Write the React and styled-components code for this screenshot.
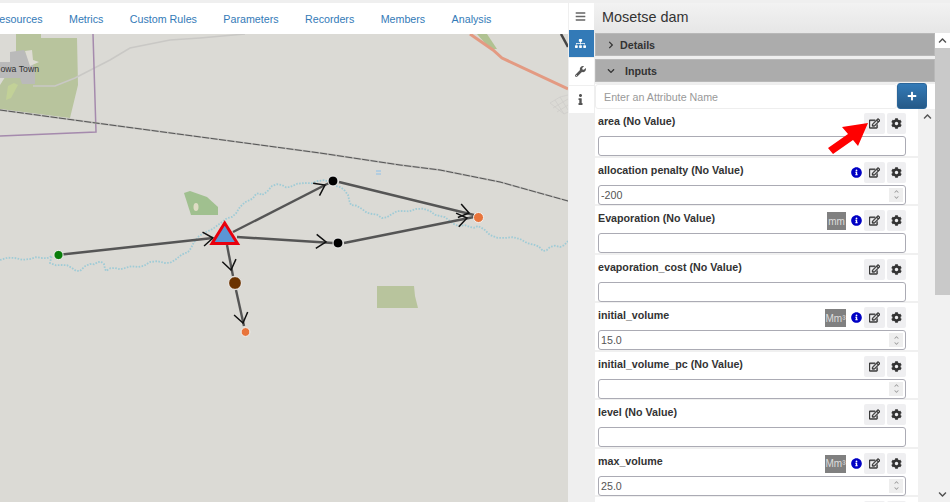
import React from 'react';
import styled, { createGlobalStyle } from 'styled-components';
import {
  FaBars, FaSitemap, FaWrench, FaInfo, FaChevronRight, FaChevronDown, FaChevronUp,
  FaPlus, FaInfoCircle, FaRegEdit, FaCog,
} from 'react-icons/fa';

const GlobalStyle = createGlobalStyle`
  html, body { margin: 0; padding: 0; height: 100%; overflow: hidden; }
  body { font-family: "Liberation Sans", Arial, sans-serif; font-size: 10.7px; color: #333; background: #f0f0f0; }
  * { box-sizing: border-box; }
`;

const Page = styled.div`
  position: relative;
  width: 950px;
  height: 502px;
  display: flex;
  padding-top: 3px;
  background: #efefef;
  overflow: hidden;
`;

const MapColumn = styled.div`
  width: 568px;
  display: flex;
  flex-direction: column;
  overflow: hidden;
`;

const Nav = styled.nav`
  height: 31px;
  flex: none;
  display: flex;
  align-items: center;
  gap: 26.4px;
  margin-left: -8.5px;
  padding-top: 1px;
  background: #fff;
  white-space: nowrap;
`;

const NavLink = styled.a`
  font-size: 10.7px;
  color: #337ab7;
`;

const MapCanvas = styled.svg`
  display: block;
  width: 568px;
  height: 468px;
  background: #dbdad5;
`;

const Rail = styled.div`
  width: 25px;
  flex: none;
  margin-left: 1px;
  display: flex;
  flex-direction: column;
  gap: 1px;
`;

const RailButton = styled.div`
  height: 27px;
  display: flex;
  align-items: center;
  padding-left: 6px;
  font-size: 11px;
  background: ${p => (p.$active ? '#337ab7' : '#fff')};
  color: ${p => (p.$active ? '#fff' : '#555')};
  &:first-child { margin-bottom: -1px; color: #666; }
`;

const Panel = styled.div`
  flex: 1;
  min-width: 0;
  display: flex;
  flex-direction: column;
`;

const PanelTitle = styled.h1`
  flex: none;
  height: 30px;
  margin: 0;
  padding: 0 0 2px 8px;
  display: flex;
  align-items: center;
  font-size: 14.4px;
  font-weight: 400;
  color: #333;
  background: linear-gradient(#f2f2f2, #e6e6e6);
`;

const PanelBody = styled.div`
  flex: 1;
  min-height: 0;
  display: flex;
`;

const PanelMain = styled.div`
  width: 341px;
  flex: none;
  display: flex;
  flex-direction: column;
  padding-left: 1px;
`;

const AccordionHead = styled.div`
  flex: none;
  height: 23px;
  margin-bottom: 3px;
  display: flex;
  align-items: center;
  gap: ${p => p.$gap}px;
  padding-left: 11px;
  background: #acacac;
  border: 1px solid #b8b8b8;
  font-size: 10.7px;
  font-weight: 700;
  color: #333;
  svg { font-size: 8px; }
`;

const AddRow = styled.div`
  flex: none;
  display: flex;
  height: 25px;
  margin-top: -1px;
  background: #fff;
`;

const AddInput = styled.input`
  width: 302px;
  height: 25px;
  padding: 0 8px;
  border: 1px solid #eee;
  border-radius: 3px;
  font: 10.7px "Liberation Sans", Arial, sans-serif;
  &::placeholder { color: #999; opacity: 1; }
`;

const AddButton = styled.button`
  width: 30px;
  height: 26px;
  margin-top: -1px;
  padding: 0;
  border: 1px solid #2b669a;
  border-radius: 3px;
  display: flex;
  align-items: center;
  justify-content: center;
  font-size: 10px;
  color: #fff;
  background: linear-gradient(#337ab7, #265a88);
`;

const ListWrap = styled.div`
  flex: 1;
  min-height: 0;
  display: flex;
  background: #fff;
`;

const List = styled.div`
  width: 323px;
  flex: none;
  overflow: hidden;
`;

const Row = styled.div`
  height: 48.5px;
  padding: 4px 12px 0 3px;
  border-bottom: 2px solid #f0f0f0;
`;

const RowHead = styled.div`
  height: 21px;
  margin-bottom: 2px;
  display: flex;
  align-items: flex-start;
  gap: 2px;
`;

const RowLabel = styled.div`
  flex: 1;
  font-size: 10.7px;
  font-weight: 700;
  line-height: 16px;
  color: #333;
`;

const UnitBadge = styled.div`
  height: 18px;
  width: ${p => p.$w}px;
  flex: none;
  margin: 2px 2px 0 0;
  display: flex;
  align-items: center;
  justify-content: center;
  font-size: 10px;
  color: #ddd;
  background: #808080;
`;

const InfoDot = styled.div`
  width: 12px;
  height: 21px;
  display: flex;
  align-items: center;
  justify-content: center;
  font-size: 11px;
  color: #0000c4;
`;

const ToolButton = styled.div`
  width: ${p => p.$w}px;
  height: 21px;
  display: flex;
  align-items: center;
  justify-content: center;
  font-size: 11px;
  color: #333;
  background: #efeff1;
  border-radius: 2px;
`;

const EditIcon = styled(FaRegEdit)`
  stroke: currentColor;
  stroke-width: 24px;
`;

const ValueWrap = styled.div`
  position: relative;
`;

const ValueInput = styled.input`
  display: block;
  width: 100%;
  height: 20px;
  padding: 0 2px;
  border: 1px solid #ababb4;
  border-radius: 3px;
  background: #fff;
  font: 10.7px "Liberation Sans", Arial, sans-serif;
  color: #555;
  &::-webkit-inner-spin-button { display: none; }
`;

const Spinner = styled.div`
  position: absolute;
  top: 3px;
  right: 3px;
  width: 14px;
  height: 14px;
  display: flex;
  flex-direction: column;
  align-items: center;
  justify-content: center;
  gap: 1px;
  font-size: 5px;
  color: #999;
  background: #eee;
`;

const InnerScroll = styled.div`
  width: 17px;
  flex: none;
  padding: 3px 0 0 1px;
  background: #f1f1f1;
  font-size: 9px;
  color: #555;
  text-align: center;
`;

const OuterScroll = styled.div`
  width: 15px;
  flex: none;
  display: flex;
  flex-direction: column;
  background: #f1f1f1;
  font-size: 9px;
  color: #505050;
`;

const ScrollCap = styled.div`
  height: 15px;
  flex: none;
  display: flex;
  align-items: center;
  justify-content: center;
  background: ${p => (p.$white ? '#fff' : 'transparent')};
`;

const ScrollThumb = styled.div`
  height: 247px;
  flex: none;
  background: #c9c9c9;
`;

const ScrollRest = styled.div`
  flex: 1;
`;

const Callout = styled.svg`
  position: absolute;
  left: 825px;
  top: 120px;
  width: 46px;
  height: 36px;
`;

const navItems = ['Resources', 'Metrics', 'Custom Rules', 'Parameters', 'Recorders', 'Members', 'Analysis'];

const attributes = [
  { label: 'area (No Value)', type: 'text' },
  { label: 'allocation penalty (No Value)', type: 'number', value: '-200', info: true },
  { label: 'Evaporation (No Value)', type: 'text', info: true, unit: 'mm', unitW: 19 },
  { label: 'evaporation_cost (No Value)', type: 'text' },
  { label: 'initial_volume', type: 'number', value: '15.0', info: true, unit: 'Mm³', unitW: 21 },
  { label: 'initial_volume_pc (No Value)', type: 'number' },
  { label: 'level (No Value)', type: 'text' },
  { label: 'max_volume', type: 'number', value: '25.0', info: true, unit: 'Mm³', unitW: 21 },
  { label: '', type: 'number' },
];

const riverPoints = [
  [0, 260], [15, 258], [30, 259], [42, 258], [52, 256], [50, 263], [62, 265], [72, 268], [80, 271], [90, 264],
  [98, 262], [104, 264], [106, 271], [115, 268], [125, 268], [138, 267], [150, 262], [165, 263], [175, 260],
  [188, 252], [194, 242], [204, 233], [222, 222], [232, 217], [240, 207], [250, 200], [256, 194], [262, 195],
  [272, 186], [282, 185], [290, 187], [305, 183], [318, 181], [330, 182], [340, 187], [348, 195], [351, 205],
  [362, 209], [372, 214], [382, 218], [392, 214], [402, 211], [416, 209], [430, 211], [440, 216], [450, 221],
  [460, 226], [470, 227], [478, 226], [490, 235], [505, 238], [520, 239], [535, 245], [543, 251], [550, 247],
  [560, 247], [568, 241],
];

// small wiggle so the river doesn't read as straight segments
const river = riverPoints
  .map(([x, y], i) => `${i ? 'L' : 'M'}${x} ${y}` + (riverPoints[i + 1]
    ? ` L${(x + riverPoints[i + 1][0]) / 2} ${(y + riverPoints[i + 1][1]) / 2 + (i % 2 ? 1.3 : -1.3)}`
    : ''))
  .join(' ');

const railway = 'M0 110 L96 123 L320 153 L400 165 L440 170 L500 182 L568 201';

const links = [
  { from: [62, 254.5], to: [213, 238], tip: [213, 238] },
  { from: [233, 232], to: [329, 183], tip: [325, 185] },
  { from: [237, 237], to: [333, 243], tip: [326, 242] },
  { from: [227, 245], to: [233, 276], tip: [231, 270] },
  { from: [236, 290], to: [244, 326], tip: [243, 323] },
  { from: [339, 182], to: [474, 215], tip: [469, 213] },
  { from: [344, 243], to: [474, 217], tip: [467, 218] },
];

const Arrow = ({ from, to, tip }) => {
  const angle = Math.atan2(to[1] - from[1], to[0] - from[0]);
  const barb = a => [tip[0] - 12 * Math.cos(angle + a), tip[1] - 12 * Math.sin(angle + a)];
  const [ax, ay] = barb(0.62);
  const [bx, by] = barb(-0.62);
  return (
    <g>
      <line x1={from[0]} y1={from[1]} x2={to[0]} y2={to[1]} stroke="#555" strokeWidth="2.4" />
      <path d={`M${ax} ${ay} L${tip[0]} ${tip[1]} L${bx} ${by}`} fill="none" stroke="#111" strokeWidth="1.5" />
    </g>
  );
};

const Node = ({ x, y, r, fill }) => <circle cx={x} cy={y} r={r} fill={fill} stroke="#f2f2f2" strokeWidth="1" />;

const MapView = () => (
  <MapCanvas viewBox="0 34 568 468">
    <polygon points="16,34 41,34 41,38 77,38 78,85 70,118 0,109 0,85 16,60" fill="#b8c49d" />
    <polygon points="10,52 24,50 28,58 35,68 35,84 22,84 20,78 0,78 0,62 10,62" fill="#bababa" />
    <polygon points="25,51 32,50 33,60 39,62 30,66" fill="#dedcd4" />
    <polygon points="8,86 14,83 18,85 11,98 6,100" fill="#c2d197" />
    <path d="M33 86 L55 86 L75 78 L110 60 L130 48 L170 40 L200 38 L245 34" fill="none" stroke="#c9c8c5" strokeWidth="1.5" />
    <path d="M93 34 L96 132 L0 136" fill="none" stroke="#a58aad" strokeWidth="1.5" />
    <path d={railway} fill="none" stroke="#bdbcb9" strokeWidth="1.8" />
    <path d={railway} fill="none" stroke="#555" strokeWidth="1" strokeDasharray="7 1.5" />
    <text x="39" y="72" textAnchor="end" fontFamily="Liberation Sans, Arial, sans-serif" fontSize="8.7" fill="#333">owa Town</text>
    <polygon points="477,34 487,34 497,49 490,49" fill="#b0c292" />
    <path d="M470 34 L493 50 L502 58 L568 89" fill="none" stroke="#e39a82" strokeWidth="3" />
    <path d="M561 34 L568 47" stroke="#444" strokeWidth="2.5" />
    <path d="M550 103 L560 97 L568 95 M553 108 L568 99 M557 112 L568 105 M555 100 L564 114 M560 97 L568 110 M550 103 L564 114 L568 112" fill="none" stroke="#cdccc8" strokeWidth="0.7" />
    <polygon points="184,193 190,191 207,197 218,207 218,215 191,215" fill="#a0c08f" />
    <ellipse cx="196" cy="207" rx="2.5" ry="4" fill="#dedcc4" />
    <polygon points="377,286 414,286 415,296 418,308 377,308" fill="#b8c49d" />
    <path d="M376 171 h5 M376 174 h5" stroke="#8cc0ea" strokeWidth="1" />
    <path d={river} fill="none" stroke="#9fcbd6" strokeWidth="1.8" strokeDasharray="1.6 1.4" />
    {links.map((l, i) => <Arrow key={i} {...l} />)}
    <polygon points="212,243.5 237.5,243.5 224.7,223" fill="#5b96d5" stroke="#e8000d" strokeWidth="3" />
    <Node x={58.5} y={255} r={4.6} fill="#0a7d0a" />
    <Node x={235} y={283} r={6.4} fill="#6b3300" />
    <Node x={245.5} y={332} r={4.4} fill="#e8743b" />
    <Node x={333} y={181} r={5} fill="#000" />
    <Node x={338} y={243} r={5} fill="#000" />
    <Node x={478.5} y={217.5} r={5} fill="#e8743b" />
  </MapCanvas>
);

const AttributeRow = ({ attr }) => (
  <Row>
    <RowHead>
      <RowLabel>{attr.label}</RowLabel>
      {attr.unit && <UnitBadge $w={attr.unitW}>{attr.unit}</UnitBadge>}
      {attr.info && (
        <InfoDot>
          <FaInfoCircle />
        </InfoDot>
      )}
      <ToolButton $w={21}><EditIcon /></ToolButton>
      <ToolButton $w={19}><FaCog /></ToolButton>
    </RowHead>
    <ValueWrap>
      <ValueInput type={attr.type} defaultValue={attr.value} readOnly />
      {attr.type === 'number' && (
        <Spinner>
          <FaChevronUp />
          <FaChevronDown />
        </Spinner>
      )}
    </ValueWrap>
  </Row>
);

const App = () => (
  <Page>
    <GlobalStyle />
    <MapColumn>
      <Nav>
        {navItems.map(item => <NavLink key={item}>{item}</NavLink>)}
      </Nav>
      <MapView />
    </MapColumn>
    <Rail>
      <RailButton><FaBars /></RailButton>
      <RailButton $active><FaSitemap /></RailButton>
      <RailButton><FaWrench /></RailButton>
      <RailButton><FaInfo /></RailButton>
    </Rail>
    <Panel>
      <PanelTitle>Mosetse dam</PanelTitle>
      <PanelBody>
        <PanelMain>
          <AccordionHead $gap={5}><FaChevronRight />Details</AccordionHead>
          <AccordionHead $gap={10}><FaChevronDown />Inputs</AccordionHead>
          <AddRow>
            <AddInput placeholder="Enter an Attribute Name" />
            <AddButton><FaPlus /></AddButton>
          </AddRow>
          <ListWrap>
            <List>
              {attributes.map((attr, i) => <AttributeRow key={i} attr={attr} />)}
            </List>
            <InnerScroll><FaChevronUp /></InnerScroll>
          </ListWrap>
        </PanelMain>
        <OuterScroll>
          <ScrollCap $white><FaChevronUp /></ScrollCap>
          <ScrollThumb />
          <ScrollRest />
          <ScrollCap><FaChevronDown /></ScrollCap>
        </OuterScroll>
      </PanelBody>
    </Panel>
    <Callout viewBox="825 120 46 36">
      <polygon points="868,123 842,127 848,134 828,148 833,154 853,140 858,146" fill="#f00" />
    </Callout>
  </Page>
);

export default App;
